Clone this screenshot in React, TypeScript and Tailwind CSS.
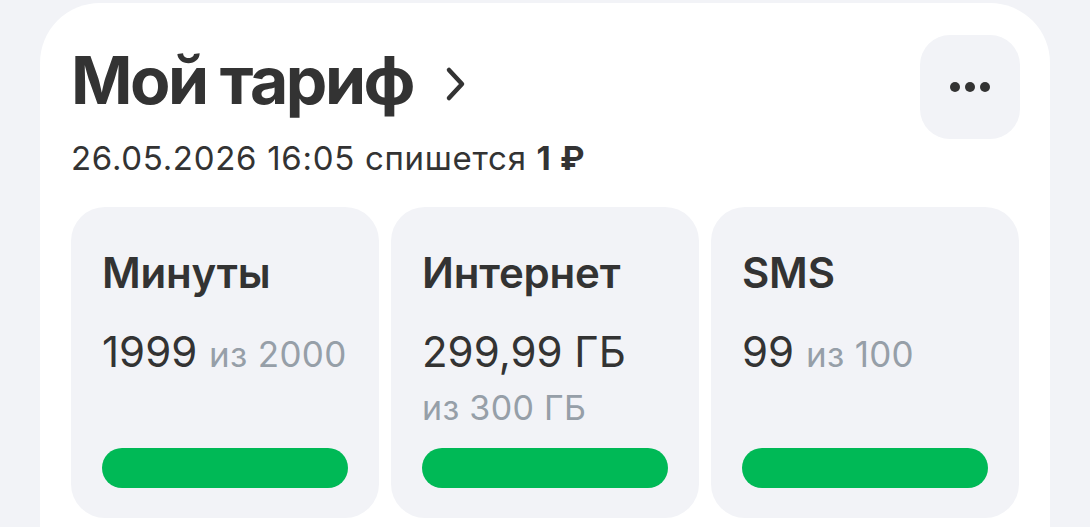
import React from 'react';

interface ItemProps {
  title: string;
  value: string;
  of: string;
  ofOnNewLine?: boolean;
}

const font = { fontFamily: 'Inter, "Noto Sans", sans-serif' };

const UsageCard: React.FC<ItemProps> = ({ title, value, of, ofOnNewLine }) => (
  <div className="flex h-[311px] flex-col rounded-[34px] bg-[#f2f3f7] px-[31px] pb-[30px] pt-[41px]">
    <div className="text-[42px] font-semibold leading-[50px] tracking-[-0.2px] text-[#333333]">{title}</div>
    {ofOnNewLine ? (
      <div className="mt-[31px]">
        <div className="text-[42px] leading-[46px] text-[#333333]">{value}</div>
        <div className="mt-[13px] text-[34px] leading-[40px] tracking-[0.3px] text-[#969fa8]">{of}</div>
      </div>
    ) : (
      <div className="mt-[31px] text-[42px] leading-[46px] text-[#333333]">
        {value} <span className="text-[35px] tracking-[0.3px] text-[#969fa8]">{of}</span>
      </div>
    )}
    <div className="mt-auto h-[40px] w-full rounded-full bg-[#00b956]" />
  </div>
);

export default function App() {
  return (
    <div className="h-[527px] w-[1090px] overflow-hidden bg-[#f2f3f7] pl-[40px] pt-[3px]" style={font}>
      <div className="h-[600px] w-[1010px] rounded-[60px] bg-white px-[31px] pt-[37px]">
        <div className="flex items-start justify-between">
          <div>
            <div className="flex items-center">
              <h1 className="text-[66px] font-bold leading-[80px] tracking-[-2.5px] text-[#333333]">Мой тариф</h1>
              <svg className="ml-[32px] mt-[7px]" width="22" height="36" viewBox="0 0 22 36" fill="none">
                <path d="M4 4L17 18L4 32" stroke="#333333" strokeWidth="4.5" strokeLinecap="round" strokeLinejoin="round" />
              </svg>
            </div>
            <div className="mt-[18px] text-[33px] leading-[40px] tracking-[0.7px] text-[#333333]">
              26.05.2026 16:05 спишется <span className="font-bold">1 ₽</span>
            </div>
          </div>
          <button className="mr-[-1px] mt-[-5px] flex h-[104px] w-[100px] items-center justify-center rounded-[30px] bg-[#f2f3f7]">
            <span className="flex gap-[5px]">
              <span className="h-[10px] w-[10px] rounded-full bg-[#333333]" />
              <span className="h-[10px] w-[10px] rounded-full bg-[#333333]" />
              <span className="h-[10px] w-[10px] rounded-full bg-[#333333]" />
            </span>
          </button>
        </div>
        <div className="mt-[29px] grid grid-cols-3 gap-[12px]">
          <UsageCard title="Минуты" value="1999" of="из 2000" />
          <UsageCard title="Интернет" value="299,99 ГБ" of="из 300 ГБ" ofOnNewLine />
          <UsageCard title="SMS" value="99" of="из 100" />
        </div>
      </div>
    </div>
  );
}
